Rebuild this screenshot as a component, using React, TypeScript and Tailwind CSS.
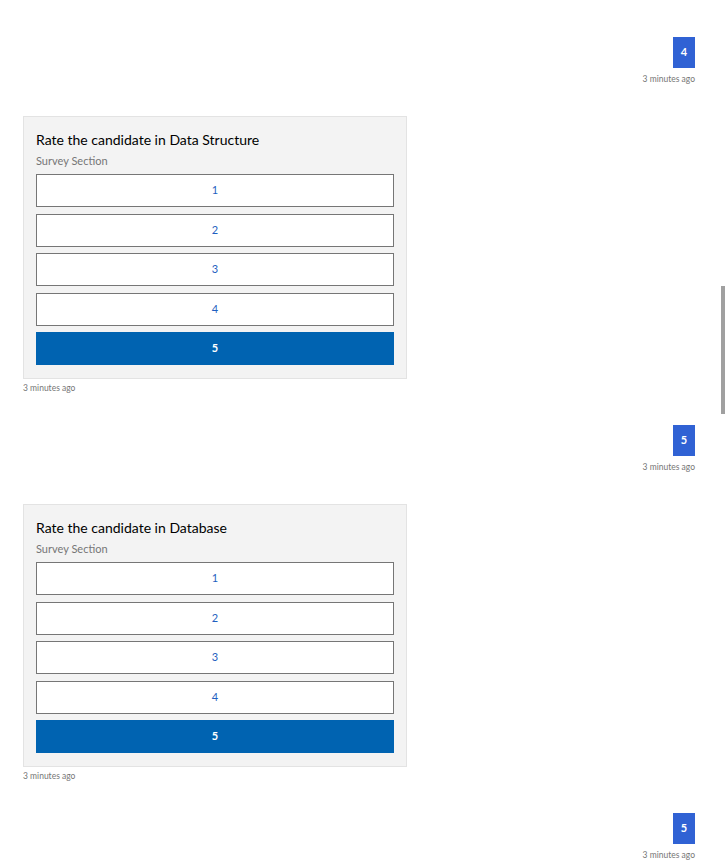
const choices = ["1", "2", "3", "4", "5"];

function Timestamp({ right }: { right?: boolean }) {
  return (
    <div className={`text-[8.5px] leading-[12px] text-[#767676] ${right ? "text-right" : ""}`}>
      3 minutes ago
    </div>
  );
}

function UserBubble({ value }: { value: string }) {
  return (
    <div className="flex flex-col items-end">
      <div className="flex h-[31px] w-[22px] items-center justify-center bg-[#3062d4] text-[11px] font-bold text-white">
        {value}
      </div>
      <div className="mt-[5px]">
        <Timestamp right />
      </div>
    </div>
  );
}

function SurveyCard({ title, selected }: { title: string; selected: string }) {
  return (
    <div className="flex flex-col items-start">
      <div className="w-[384px] border border-[#e3e3e3] bg-[#f3f3f3] px-[12px] pb-[13px] pt-[12px]">
        <div className="text-[14px] leading-[21px] text-black">{title}</div>
        <div className="mt-[3px] text-[11px] leading-[16px] text-[#767676]">Survey Section</div>
        <div className="mt-[5px] flex flex-col gap-[6.5px]">
          {choices.map((c) =>
            c === selected ? (
              <div
                key={c}
                className="flex h-[33px] items-center justify-center bg-[#0063b1] text-[11px] font-bold text-white"
              >
                {c}
              </div>
            ) : (
              <div
                key={c}
                className="flex h-[33px] items-center justify-center border border-[#767676] bg-white text-[11px] text-[#1f5fc0]"
              >
                {c}
              </div>
            )
          )}
        </div>
      </div>
      <div className="mt-[3px]">
        <Timestamp />
      </div>
    </div>
  );
}

export default function App() {
  return (
    <div
      className="relative h-[867px] w-[726px] overflow-hidden bg-white"
      style={{ fontFamily: 'Lato, "Open Sans", sans-serif' }}
    >
      <div className="flex flex-col gap-[31px] pl-[23px] pr-[31px] pt-[37px]">
        <UserBubble value="4" />
        <SurveyCard title="Rate the candidate in Data Structure" selected="5" />
        <UserBubble value="5" />
        <SurveyCard title="Rate the candidate in Database" selected="5" />
        <UserBubble value="5" />
      </div>
      <div className="absolute right-[1px] top-[286px] h-[128px] w-[4px] bg-[#a0a0a0]" />
    </div>
  );
}
